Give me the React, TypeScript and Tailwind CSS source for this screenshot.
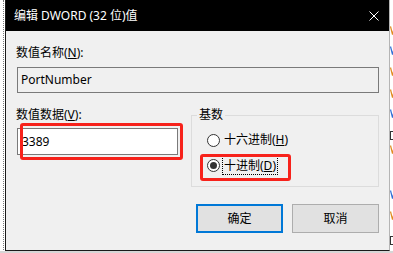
const sideMarks = [26, 46, 67, 89, 109, 131, 145, 190, 211, 236];

function Radio({ checked }: { checked?: boolean }) {
  return (
    <span className="flex h-[13px] w-[13px] shrink-0 items-center justify-center rounded-full border border-[#333333] bg-white">
      {checked && <span className="h-[7px] w-[7px] rounded-full bg-[#333333]" />}
    </span>
  );
}

export default function App() {
  return (
    <div className="relative h-[253px] w-[393px] overflow-hidden bg-white font-['Noto_Sans','Noto_Sans_CJK_SC',sans-serif] text-[12px] text-black">
      {/* desktop behind the dialog */}
      <div className="absolute left-[3px] top-0 h-[250px] border-l border-dotted border-[#7a7a7a]" />
      <div className="absolute left-0 top-[251px] h-[2px] w-[393px] bg-[#d6d6d6]" />
      {sideMarks.map((y, i) => (
        <svg
          key={y}
          className="absolute left-[390px]"
          style={{ top: y }}
          width="6"
          height="9"
          viewBox="0 0 6 9"
        >
          {i === 5 || i === 9 ? (
            <rect x="0.5" y="0.5" width="5" height="8" fill="none" stroke="#333" />
          ) : (
            <path d="M0.5 0.5 L2.5 8.5 L4.5 0.5" fill="none" stroke={i % 3 === 1 ? "#2f6fd6" : "#e08a1e"} strokeWidth="1.2" />
          )}
        </svg>
      ))}

      {/* dialog window */}
      <div className="absolute left-[5px] top-0 flex h-[251px] w-[385px] flex-col border-b border-l border-r border-b-[#1a1a1a] border-l-[#1a1a1a] border-r-[#b4b4b4] bg-[#f0f0f0]">
        <div className="flex h-[31px] shrink-0 items-center justify-between bg-black pl-[8px] pr-[10px] text-white">
          <span className="leading-[16px]">编辑 DWORD (32 位)值</span>
          <svg width="10" height="10" viewBox="0 0 10 10">
            <path d="M0.5 0.5 L9.5 9.5 M9.5 0.5 L0.5 9.5" stroke="white" strokeWidth="1" />
          </svg>
        </div>

        <div className="flex flex-col pl-[11px] pr-[10px]">
          <div className="mt-[14px] -ml-[1px] leading-[16px]">
            数值名称(<span className="underline">N</span>):
          </div>
          <div className="mt-[6px] flex h-[26px] items-center border border-[#7a7a7a] bg-[#f0f0f0] pl-[3px]">
            PortNumber
          </div>

          <div className="mt-[14px] flex gap-[13px]">
            <div className="flex w-[161px] flex-col">
              <div className="-ml-[1px] leading-[16px]">
                数值数据(<span className="underline">V</span>):
              </div>
              <div className="mt-[5px] flex h-[27px] items-center border border-[#7a7a7a] bg-white pl-[4px]">
                3389
              </div>
            </div>

            <fieldset className="h-[80px] w-[188px] border border-[#dcdcdc]">
              <legend className="ml-[5px] px-[2px] leading-[16px]">基数</legend>
              <div className="mt-[9px] flex h-[16px] items-center gap-[4px] pl-[15px]">
                <Radio />
                <span className="leading-[16px]">
                  十六进制(<span className="underline">H</span>)
                </span>
              </div>
              <div className="mt-[8px] flex h-[19px] items-center gap-[2px] pl-[15px]">
                <Radio checked />
                <span className="border border-dotted border-black px-[1px] leading-[17px]">
                  十进制(<span className="underline">D</span>)
                </span>
              </div>
            </fieldset>
          </div>

          <div className="mt-[17px] flex justify-end gap-[9px]">
            <button className="flex h-[29px] w-[87px] items-center justify-center border-2 border-[#0078d7] bg-[#e1e1e1]">
              确定
            </button>
            <button className="flex h-[29px] w-[87px] items-center justify-center border border-[#adadad] bg-[#e1e1e1]">
              取消
            </button>
          </div>
        </div>
      </div>

      {/* red annotation boxes */}
      <div className="absolute left-[20px] top-[123px] h-[37px] w-[163px] rounded-[3px] border-[3px] border-[#f7221b]" />
      <div className="absolute left-[200px] top-[154px] h-[27px] w-[91px] rounded-[3px] border-[3px] border-[#f7221b]" />
    </div>
  );
}
